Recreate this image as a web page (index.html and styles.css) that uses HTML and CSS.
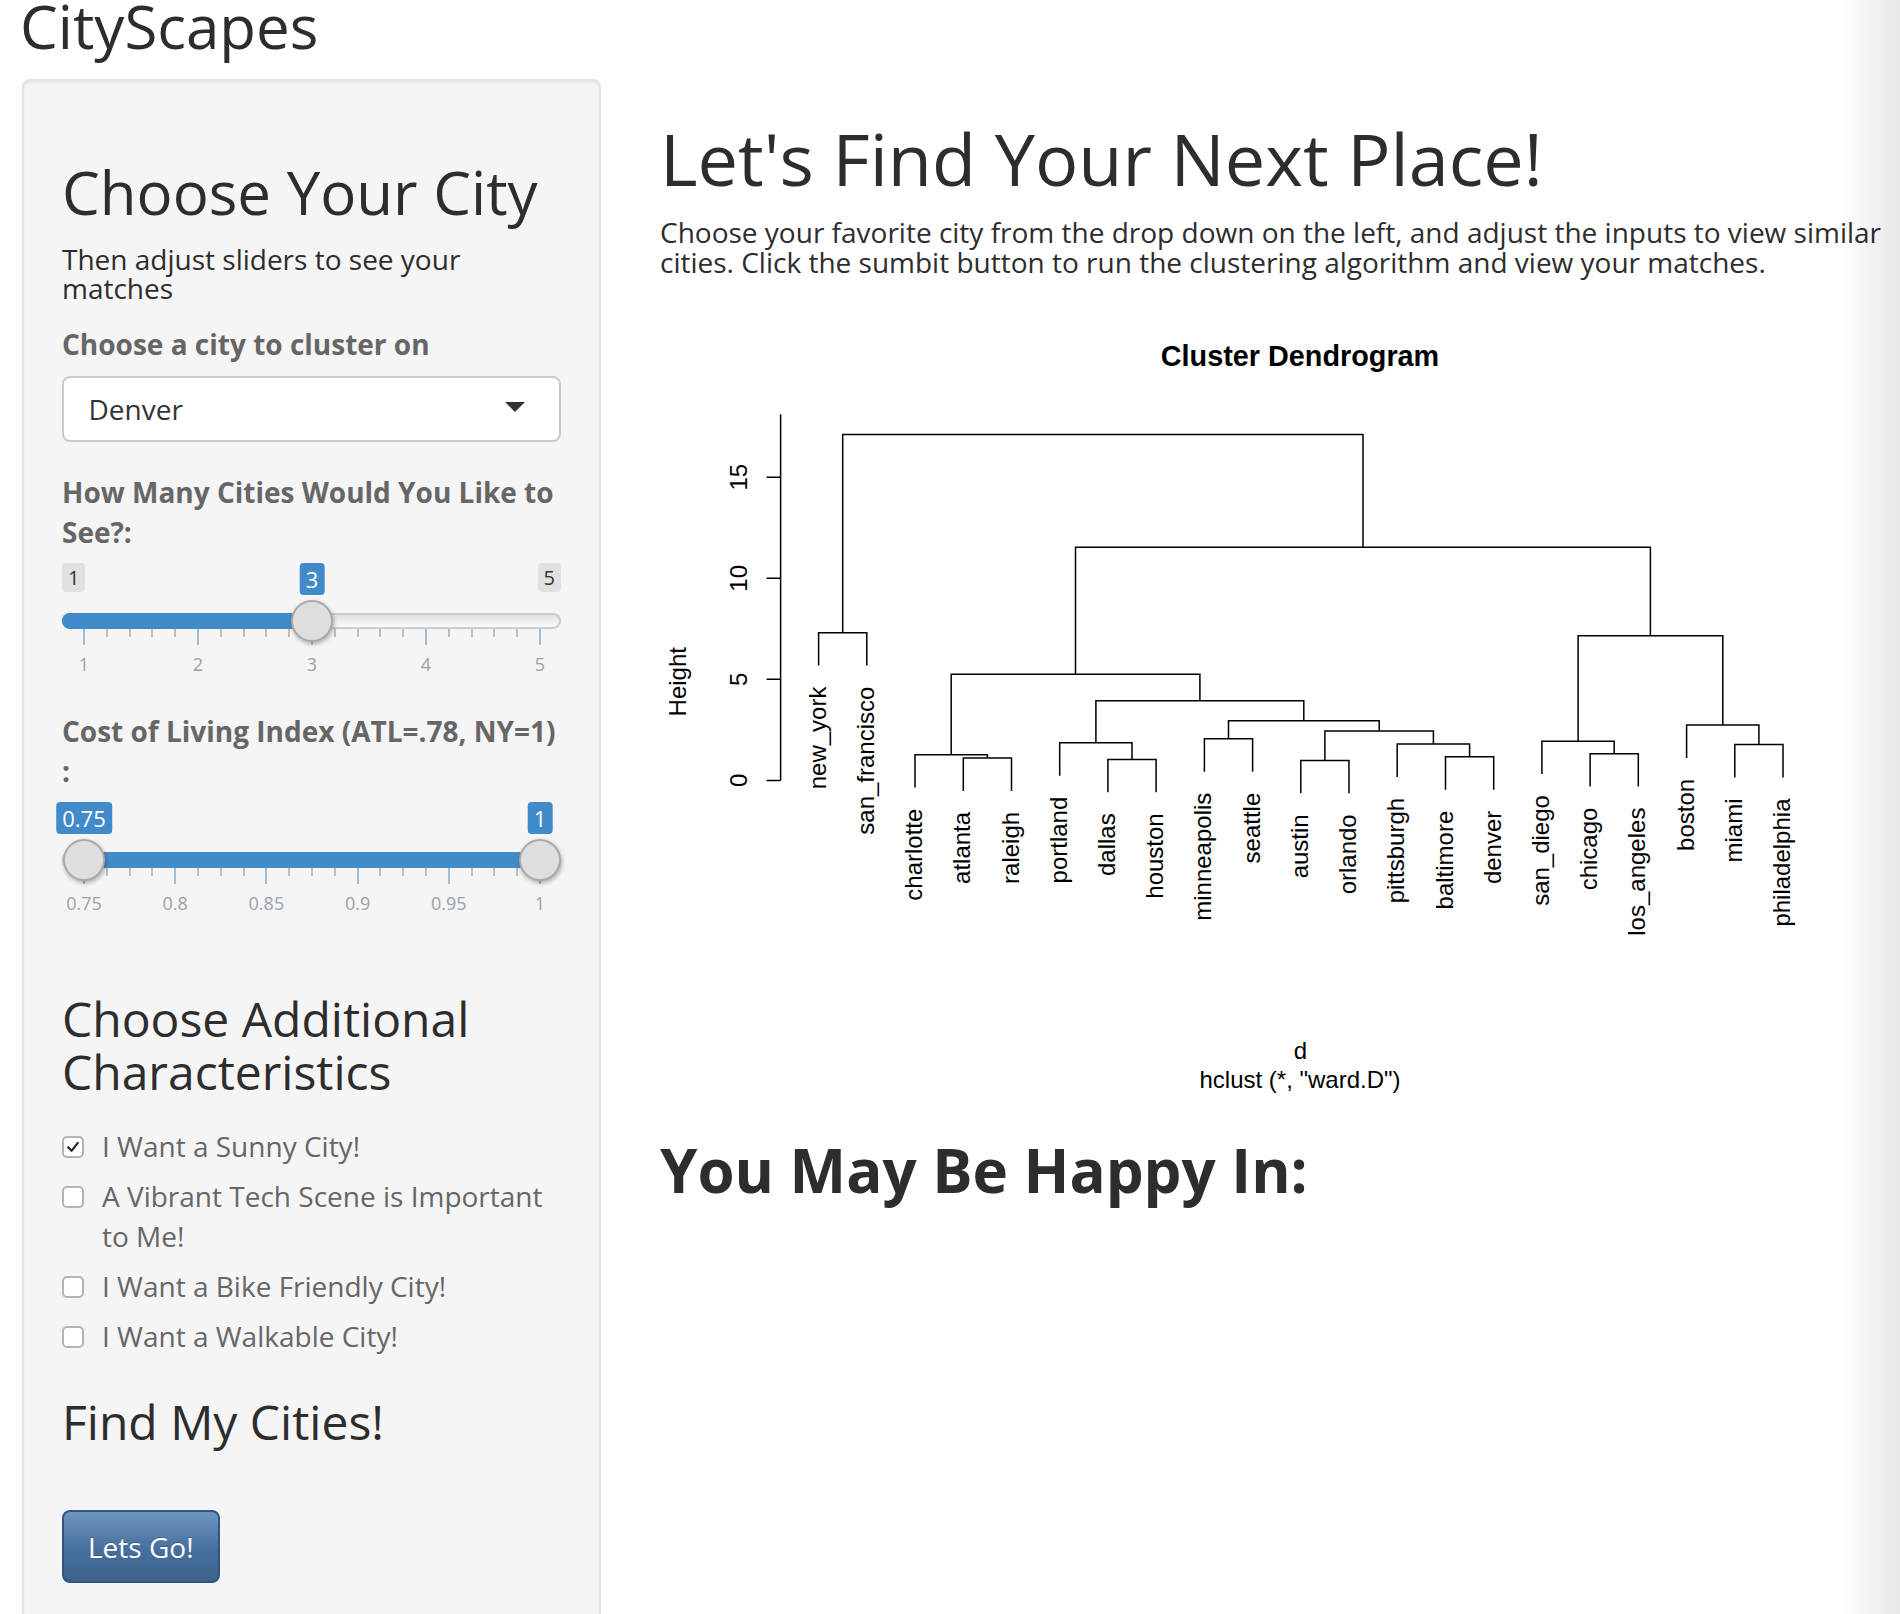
FILE: index.html
```html
<!DOCTYPE html>
<html lang="en">
<head>
<meta charset="utf-8">
<title>CityScapes</title>
<link rel="stylesheet" href="styles.css">
</head>
<body>
<h2 class="app-title">CityScapes</h2>
<div class="layout">
  <aside class="well">
    <h2 class="panel-title">Choose Your City</h2>
    <h5 class="lead-text">Then adjust sliders to see your matches</h5>

    <div class="form-group">
      <label class="control-label">Choose a city to cluster on</label>
      <div class="select-box"><span class="select-value">Denver</span><span class="select-caret"></span></div>
    </div>

    <div class="form-group">
      <label class="control-label">How Many Cities Would You Like to See?:</label>
      <div class="irs">
        <div class="irs-labels"><span class="irs-min">1</span><span class="irs-max">5</span></div>
        <span class="irs-tag" style="left:250px">3</span>
        <div class="irs-line"><div class="irs-bar irs-bar-single" style="width:250px"></div></div>
        <span class="irs-handle" style="left:250px"></span>
        <div class="irs-grid">
          <span class="tick"></span><span class="tick small"></span><span class="tick small"></span><span class="tick small"></span><span class="tick small"></span>
          <span class="tick"></span><span class="tick small"></span><span class="tick small"></span><span class="tick small"></span><span class="tick small"></span>
          <span class="tick"></span><span class="tick small"></span><span class="tick small"></span><span class="tick small"></span><span class="tick small"></span>
          <span class="tick"></span><span class="tick small"></span><span class="tick small"></span><span class="tick small"></span><span class="tick small"></span>
          <span class="tick"></span>
        </div>
        <div class="irs-grid-text">
          <span class="gt">1</span><span class="gt">2</span><span class="gt">3</span><span class="gt">4</span><span class="gt">5</span>
        </div>
      </div>
    </div>

    <div class="form-group">
      <label class="control-label">Cost of Living Index (ATL=.78, NY=1) :</label>
      <div class="irs">
        <div class="irs-labels"></div>
        <span class="irs-tag" style="left:22px">0.75</span>
        <span class="irs-tag" style="left:478px">1</span>
        <div class="irs-line"><div class="irs-bar irs-bar-range" style="width:456px"></div></div>
        <span class="irs-handle" style="left:22px"></span>
        <span class="irs-handle" style="left:478px"></span>
        <div class="irs-grid">
          <span class="tick"></span><span class="tick small"></span><span class="tick small"></span><span class="tick small"></span>
          <span class="tick"></span><span class="tick small"></span><span class="tick small"></span><span class="tick small"></span>
          <span class="tick"></span><span class="tick small"></span><span class="tick small"></span><span class="tick small"></span>
          <span class="tick"></span><span class="tick small"></span><span class="tick small"></span><span class="tick small"></span>
          <span class="tick"></span><span class="tick small"></span><span class="tick small"></span><span class="tick small"></span>
          <span class="tick"></span>
        </div>
        <div class="irs-grid-text">
          <span class="gt">0.75</span><span class="gt">0.8</span><span class="gt">0.85</span><span class="gt">0.9</span><span class="gt">0.95</span><span class="gt">1</span>
        </div>
      </div>
    </div>

    <h3 class="section-title">Choose Additional Characteristics</h3>
    <div class="checkbox-group">
      <div class="checkbox"><span class="cb checked"><svg viewBox="0 0 18 18" width="18" height="18"><path d="M4.2 9.2 L7.6 12.8 L13.8 4.8" fill="none" stroke="#222" stroke-width="2.1" stroke-linecap="round" stroke-linejoin="round"/></svg></span><span class="cb-text">I Want a Sunny City!</span></div>
      <div class="checkbox"><span class="cb"></span><span class="cb-text">A Vibrant Tech Scene is Important to Me!</span></div>
      <div class="checkbox"><span class="cb"></span><span class="cb-text">I Want a Bike Friendly City!</span></div>
      <div class="checkbox"><span class="cb"></span><span class="cb-text">I Want a Walkable City!</span></div>
    </div>

    <h3 class="find-title">Find My Cities!</h3>
    <button class="btn-primary" type="button">Lets Go!</button>
  </aside>

  <main class="main">
    <h1 class="main-title">Let's Find Your Next Place!</h1>
    <h5 class="lead-text">Choose your favorite city from the drop down on the left, and adjust the inputs to view similar cities. Click the sumbit button to run the clustering algorithm and view your matches.</h5>

    <svg class="plot" width="1238" height="800" viewBox="660 297.3 1238 800" xmlns="http://www.w3.org/2000/svg">
      <text class="dg-title" x="1300" y="366" text-anchor="middle">Cluster Dendrogram</text>
      <path class="dg-line" d="M780.6 414.6V780.7 M766.6 780.7H780.6 M766.6 679.6H780.6 M766.6 578.6H780.6 M766.6 477.5H780.6"/>
      <g class="dg-text" text-anchor="middle">
        <text transform="translate(747 780.7) rotate(-90)">0</text>
        <text transform="translate(747 679.6) rotate(-90)">5</text>
        <text transform="translate(747 578.6) rotate(-90)">10</text>
        <text transform="translate(747 477.5) rotate(-90)">15</text>
        <text transform="translate(686 682) rotate(-90)">Height</text>
        <text x="1300.5" y="1059">d</text>
        <text x="1300" y="1088">hclust (*, "ward.D")</text>
      </g>
      <path class="dg-line" d="M818.6 665.9V633H866.8V665.9
        M963.3 791.2V758.3H1011.5V791.2
        M915 787.9V755H987.4V758.3
        M1107.9 792.6V759.7H1156.1V792.6
        M1059.7 776V743.1H1132V759.7
        M1204.4 772V739.1H1252.6V772
        M1300.8 793.6V760.7H1349V793.6
        M1445.5 790V757.1H1493.7V790
        M1397.2 777.2V744.3H1469.6V757.1
        M1324.9 760.7V731.4H1433.4V744.3
        M1228.5 739.1V721.1H1379.2V731.4
        M1095.9 743.1V701.1H1303.8V721.1
        M951.2 755V674.6H1199.9V701.1
        M1590.1 786.9V754H1638.3V786.9
        M1541.9 774.4V741.5H1614.2V754
        M1734.8 777.8V744.9H1783V777.8
        M1686.6 758.2V725.3H1758.9V744.9
        M1578.1 741.5V636H1722.8V725.3
        M1075.5 674.6V547.5H1650.4V636
        M842.7 633V434.7H1363V547.5"/>
      <g class="dg-text" text-anchor="end">
        <text transform="translate(825.6 686.9) rotate(-90)">new_york</text>
        <text transform="translate(873.8 686.9) rotate(-90)">san_francisco</text>
        <text transform="translate(922 808.9) rotate(-90)">charlotte</text>
        <text transform="translate(970.3 812.2) rotate(-90)">atlanta</text>
        <text transform="translate(1018.5 812.2) rotate(-90)">raleigh</text>
        <text transform="translate(1066.7 797) rotate(-90)">portland</text>
        <text transform="translate(1114.9 813.6) rotate(-90)">dallas</text>
        <text transform="translate(1163.1 813.6) rotate(-90)">houston</text>
        <text transform="translate(1211.4 793) rotate(-90)">minneapolis</text>
        <text transform="translate(1259.6 793) rotate(-90)">seattle</text>
        <text transform="translate(1307.8 814.6) rotate(-90)">austin</text>
        <text transform="translate(1356 814.6) rotate(-90)">orlando</text>
        <text transform="translate(1404.2 798.2) rotate(-90)">pittsburgh</text>
        <text transform="translate(1452.5 811) rotate(-90)">baltimore</text>
        <text transform="translate(1500.7 811) rotate(-90)">denver</text>
        <text transform="translate(1548.9 795.4) rotate(-90)">san_diego</text>
        <text transform="translate(1597.1 807.9) rotate(-90)">chicago</text>
        <text transform="translate(1645.3 807.9) rotate(-90)">los_angeles</text>
        <text transform="translate(1693.6 779.2) rotate(-90)">boston</text>
        <text transform="translate(1741.8 798.8) rotate(-90)">miami</text>
        <text transform="translate(1790 798.8) rotate(-90)">philadelphia</text>
      </g>
    </svg>

    <h2 class="result-title">You May Be Happy In:</h2>
  </main>
</div>
<div class="edge-shade"></div>
</body>
</html>
```

FILE: styles.css
```css
* { box-sizing: border-box; }

html, body {
  margin: 0;
  padding: 0;
}

body {
  display: flow-root;
  width: 1900px;
  height: 1614px;
  overflow: hidden;
  position: relative;
  background: #ffffff;
  color: #666666;
  font-family: "Open Sans", "Liberation Sans", sans-serif;
  font-size: 28px;
  line-height: 40px;
}

h1, h2, h3, h5 {
  color: #2d2d2d;
  font-weight: 400;
}

.app-title {
  margin: 0 0 27px 20px;
  font-size: 60px;
  line-height: 52px;
}

.layout {
  display: flex;
  align-items: flex-start;
  gap: 59px;
  padding-left: 22px;
}

/* ---------- sidebar well ---------- */
.well {
  flex: none;
  width: 579px;
  padding: 38px 38px 200px;
  background: #f5f5f5;
  border: 2px solid #e3e3e3;
  border-radius: 8px;
  box-shadow: inset 0 2px 2px rgba(0, 0, 0, 0.05);
}

.panel-title {
  margin: 40px 0 20px;
  font-size: 60px;
  line-height: 66px;
}

.lead-text {
  margin: 20px 0;
  font-size: 28px;
  line-height: 29.4px;
}

.form-group {
  margin-bottom: 30px;
}

.control-label {
  display: block;
  margin-bottom: 10px;
  font-weight: 700;
  font-size: 28px;
  line-height: 40px;
  color: #666666;
}

.form-group:first-of-type .control-label {
  margin-bottom: 12px;
}

.select-box {
  display: flex;
  align-items: center;
  justify-content: space-between;
  height: 66px;
  padding: 0 34px 0 24.5px;
  background: #ffffff;
  border: 2px solid #cacaca;
  border-radius: 8px;
  color: #333333;
  font-size: 28px;
  line-height: 40px;
}

.select-caret {
  width: 0;
  height: 0;
  margin-top: -3px;
  border-left: 10px solid transparent;
  border-right: 10px solid transparent;
  border-top: 10px solid #333333;
}

/* ---------- range slider ---------- */
.irs {
  position: relative;
  height: 119px;
}

.irs-labels {
  display: flex;
  justify-content: space-between;
  align-items: flex-start;
  height: 33px;
  padding-top: 1px;
}

.irs-min, .irs-max {
  padding: 0 6px;
  background: #e1e1e1;
  border-radius: 4px;
  color: #333333;
  font-size: 20px;
  line-height: 29px;
}

.irs-tag {
  position: absolute;
  top: 1px;
  transform: translateX(-50%);
  padding: 0 6px;
  background: #428bca;
  border-radius: 4px;
  color: #ffffff;
  font-size: 22px;
  line-height: 32px;
  white-space: nowrap;
}

.irs-line {
  display: flex;
  height: 16px;
  margin-top: 17.7px;
  border-radius: 8px;
  background: linear-gradient(#dcdcdc, #ffffff);
  box-shadow: inset 0 0 0 2px #cdcdcd;
}

.irs-bar {
  height: 16px;
  background: #428bca;
}

.irs-bar-single {
  border-radius: 8px 0 0 8px;
}

.irs-bar-range {
  margin-left: 22px;
}

.irs-handle {
  position: absolute;
  top: 37.7px;
  width: 42px;
  height: 42px;
  margin-left: -21px;
  border-radius: 50%;
  background: #dedede;
  border: 2px solid #a9a9a9;
  box-shadow: 1px 2px 4px rgba(0, 0, 0, 0.3);
}

.irs-grid {
  display: flex;
  justify-content: space-between;
  height: 16px;
  margin: 0 21px 0 22px;
}

.tick {
  display: flex;
  justify-content: center;
  width: 0;
}

.tick::before {
  content: "";
  flex: none;
  width: 2px;
  height: 16px;
  background: #9bc0df;
}

.tick.small::before {
  height: 8px;
  background: #bdbdbd;
}

.irs-grid-text {
  display: flex;
  justify-content: space-between;
  margin: 7.4px 21px 0 22px;
  color: #99a2ab;
  font-size: 18px;
  line-height: 24px;
}

.gt {
  display: flex;
  justify-content: center;
  width: 0;
  white-space: nowrap;
}

/* ---------- checkboxes ---------- */
.section-title {
  margin: 73px 0 20px;
  font-size: 48px;
  line-height: 52.8px;
}

.checkbox-group {
  display: flex;
  flex-direction: column;
  gap: 10px;
  margin-top: 27.4px;
}

.checkbox {
  display: flex;
  align-items: flex-start;
  gap: 18px;
  font-size: 28px;
  line-height: 40px;
  color: #666666;
}

.cb {
  flex: none;
  display: flex;
  align-items: center;
  justify-content: center;
  width: 22px;
  height: 22px;
  margin-top: 10.5px;
  background: #ffffff;
  border: 2px solid #b4b4b4;
  border-radius: 5px;
}

.find-title {
  margin: 40px 0 0;
  font-size: 48px;
  line-height: 52.8px;
}

.btn-primary {
  display: inline-block;
  margin-top: 61.7px;
  padding: 14.4px 24px;
  border: 2px solid #2f5682;
  border-radius: 8px;
  background: linear-gradient(#6f95bf, #456f9c 55%, #3d638d);
  color: #ffffff;
  font-family: "Open Sans", "Liberation Sans", sans-serif;
  font-size: 28px;
  line-height: 40px;
  text-shadow: 0 -1px 0 rgba(0, 0, 0, 0.2);
}

/* ---------- main column ---------- */
.main {
  flex: none;
  width: 1238px;
}

.main-title {
  margin: 40px 0 20px;
  font-size: 72px;
  line-height: 79.2px;
}

.plot {
  display: block;
}

.dg-line {
  fill: none;
  stroke: #000000;
  stroke-width: 1.5;
}

.dg-text {
  font-family: "Liberation Sans", Arial, sans-serif;
  font-size: 24px;
  fill: #000000;
}

.dg-title {
  font-family: "Liberation Sans", Arial, sans-serif;
  font-size: 28.8px;
  font-weight: 700;
  fill: #000000;
}

.result-title {
  margin: 40px 0 0;
  font-size: 60px;
  line-height: 66px;
  font-weight: 700;
}

/* faint shadow along the right window edge */
.edge-shade {
  position: absolute;
  top: 0;
  right: 0;
  width: 60px;
  height: 100%;
  background: linear-gradient(to right, rgba(0, 0, 0, 0), rgba(0, 0, 0, 0.09));
  pointer-events: none;
}
```
